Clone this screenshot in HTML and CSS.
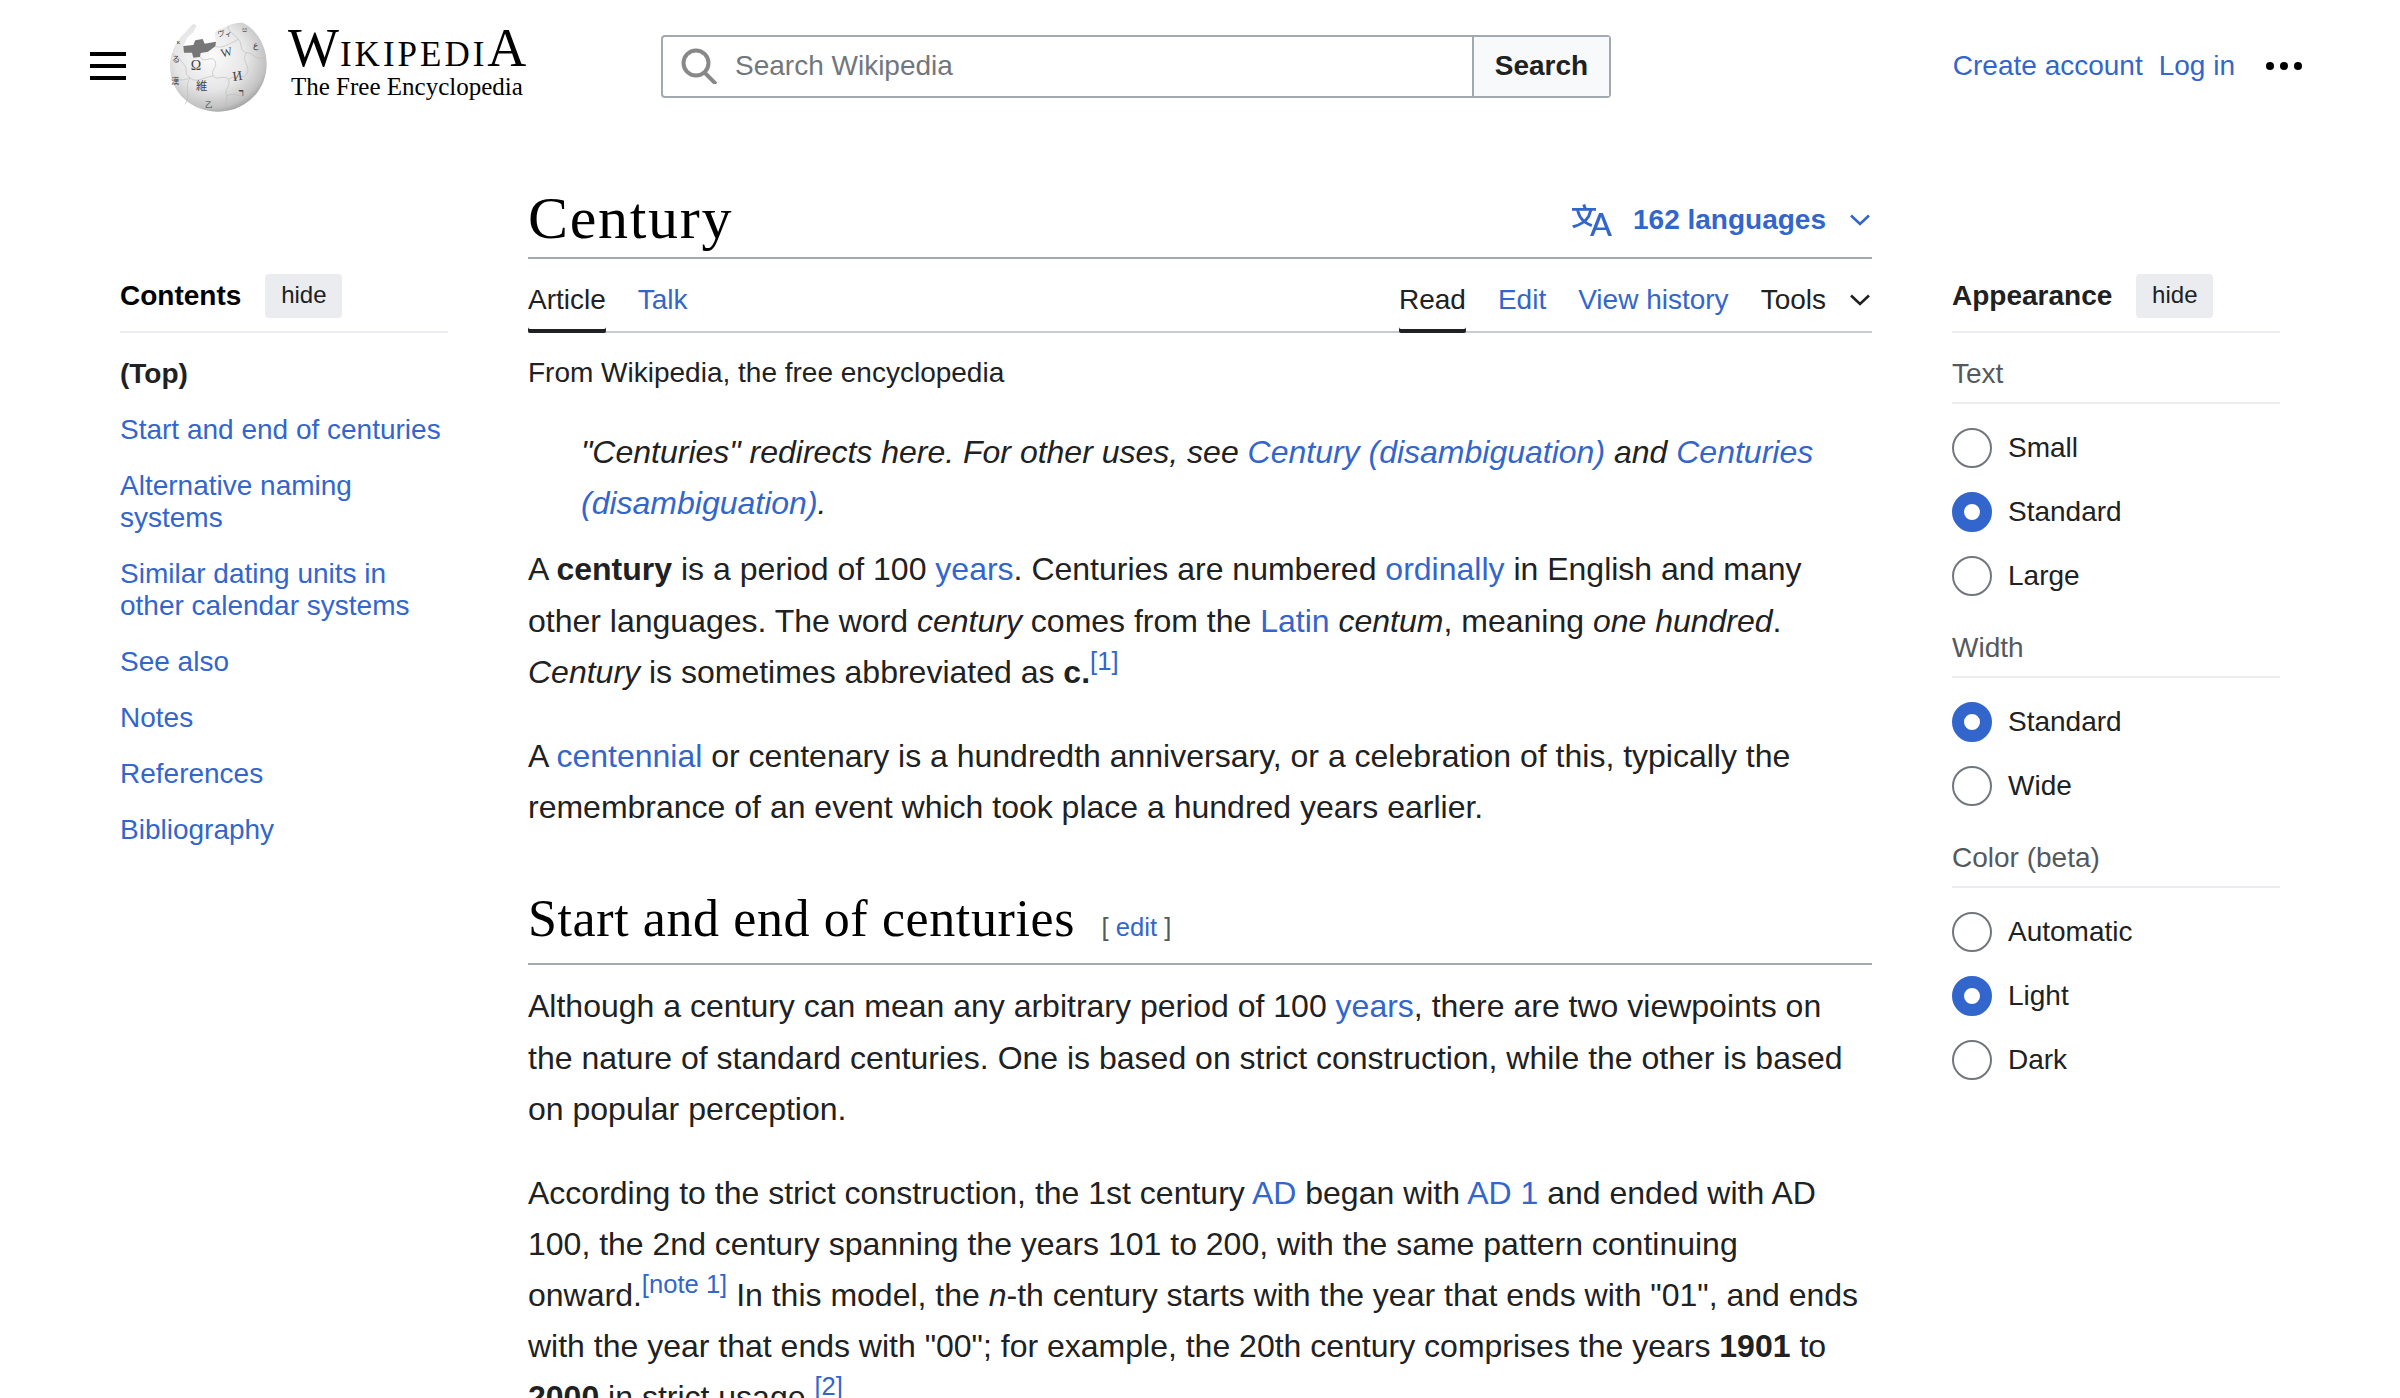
FILE: index.html
```html
<!DOCTYPE html>
<html lang="en">
<head>
<meta charset="utf-8">
<title>Century - Wikipedia</title>
<link rel="stylesheet" href="styles.css">
</head>
<body>

<header class="site-header">
  <div class="menu-btn"><span></span><span></span><span></span></div>
  <svg class="globe" viewBox="0 0 360 330" width="120" height="110">
    <defs>
      <radialGradient id="globeFill" cx="42%" cy="38%" r="68%">
        <stop offset="0" stop-color="#fbfbfb"/>
        <stop offset=".55" stop-color="#e6e6e6"/>
        <stop offset=".85" stop-color="#c2c2c2"/>
        <stop offset="1" stop-color="#8e8e8e"/>
      </radialGradient>
    </defs>
    <path fill="url(#globeFill)" d="M30 165C30 128 46 94 72 68L100 38L110 44L100 64L82 80L70 106L100 102L106 88L128 84L134 98L168 92L164 66L172 58L205 44C225 34 240 34 250 36C292 58 320 106 320 158C320 240 255 302 175 302C95 302 30 245 30 165Z"/>
    <path fill="#777" d="M70 105L100 102L106 88L128 84L134 98L168 92L166 106L144 122L122 126L120 138L100 140L96 125L72 125Z"/>
    <g fill="none" stroke="#bdbdbd" stroke-width="2">
      <path d="M36 130C60 135 60 150 72 160C85 175 70 190 90 200C60 215 50 200 34 205"/>
      <path d="M120 138C135 160 155 130 165 150C175 170 150 175 160 195C170 210 195 190 205 205C215 225 190 235 200 255C205 270 190 285 195 300"/>
      <path d="M166 106C185 115 215 95 235 85C250 100 235 120 260 125C285 125 280 150 318 140"/>
      <path d="M90 200C105 220 140 195 160 195M90 200C70 235 95 250 75 280"/>
      <path d="M200 255C225 240 245 265 265 255C285 240 275 215 310 215"/>
      <path d="M260 125C240 150 275 165 260 190C250 205 225 190 205 205"/>
      <path d="M205 44C200 60 225 70 235 85"/>
    </g>
    <g class="globe-glyphs">
      <text x="92" y="178" font-size="42">Ω</text>
      <text x="184" y="136" font-size="36" transform="rotate(-14 200 130)">W</text>
      <text x="218" y="208" font-size="40" transform="rotate(-8 235 195)">И</text>
      <text x="108" y="238" font-size="34" class="cjk">維</text>
      <text x="236" y="256" font-size="32" font-weight="bold">ר</text>
      <text x="172" y="76" font-size="22" class="cjk">ヴィ</text>
      <text x="278" y="112" font-size="28">ع</text>
      <text x="36" y="152" font-size="24" class="cjk">る</text>
      <text x="34" y="220" font-size="24" class="cjk">漢</text>
      <text x="50" y="98" font-size="20">к</text>
      <text x="245" y="62" font-size="22">ස</text>
      <text x="135" y="288" font-size="22" class="cjk">乙</text>
    </g>
  </svg>
  <a class="wordmark">
    <span class="wm-name">W<span class="wm-small">ikipedi</span>a</span>
    <span class="wm-tag">The Free Encyclopedia</span>
  </a>
  <form class="search-box">
    <div class="search-input">
      <svg class="search-icon" viewBox="0 0 36 36" width="36" height="36"><circle cx="15" cy="15" r="12.5" fill="none" stroke="#888" stroke-width="4"/><path d="M23 24L35 36" stroke="#888" stroke-width="4" fill="none"/></svg>
      <input type="text" placeholder="Search Wikipedia">
    </div>
    <button type="button" class="search-btn">Search</button>
  </form>
  <nav class="user-links">
    <a>Create account</a>
    <a>Log in</a>
    <span class="more-dots"><i></i><i></i><i></i></span>
  </nav>
</header>

<div class="page">

  <div class="title-row">
    <h1>Century</h1>
    <a class="lang-btn">
      <svg viewBox="0 0 20 20" width="40" height="40"><path fill="#36c" d="M20 18h-1.44a.6.6 0 0 1-.4-.12.8.8 0 0 1-.23-.31L17 15h-5l-1 2.54a.8.8 0 0 1-.22.3.6.6 0 0 1-.4.14H9l4.55-11.47h1.89zm-3.53-4.31L14.89 9.5a12 12 0 0 1-.39-1.24q-.09.37-.19.69l-.19.56-1.58 4.19zm-6.3-1.58a13.4 13.4 0 0 1-2.91-1.41 11.46 11.46 0 0 0 2.81-5.37H12V4H7.31a4 4 0 0 0-.2-.56C6.87 2.79 6.6 2 6.6 2l-1.47.5s.4.89.6 1.5H0v1.33h2.15A11.23 11.23 0 0 0 5 10.7a17.2 17.2 0 0 1-5 2.1q.56.82.87 1.38a23.3 23.3 0 0 0 5.22-2.51 15.6 15.6 0 0 0 3.56 1.77zM3.63 5.33h4.91a8.1 8.1 0 0 1-2.45 4.45 9.1 9.1 0 0 1-2.46-4.45"/></svg>
      <span>162 languages</span>
      <svg class="chev" viewBox="0 0 20 12" width="20" height="12"><path d="M1 1.5L10 10L19 1.5" fill="none" stroke="#36c" stroke-width="2.6"/></svg>
    </a>
  </div>

  <aside class="toc">
    <div class="panel-head"><b>Contents</b><span class="hide-btn">hide</span></div>
    <ul>
      <li class="toc-top">(Top)</li>
      <li><a>Start and end of centuries</a></li>
      <li><a>Alternative naming<br>systems</a></li>
      <li><a>Similar dating units in<br>other calendar systems</a></li>
      <li><a>See also</a></li>
      <li><a>Notes</a></li>
      <li><a>References</a></li>
      <li><a>Bibliography</a></li>
    </ul>
  </aside>

  <main class="article">
    <div class="tabs">
      <div class="tab-group">
        <span class="tab selected">Article</span>
        <a class="tab">Talk</a>
      </div>
      <div class="tab-group">
        <span class="tab selected">Read</span>
        <a class="tab">Edit</a>
        <a class="tab">View history</a>
        <span class="tab tools">Tools
          <svg viewBox="0 0 20 12" width="20" height="12"><path d="M1 1.5L10 10L19 1.5" fill="none" stroke="#202122" stroke-width="2.6"/></svg>
        </span>
      </div>
    </div>

    <div class="site-sub">From Wikipedia, the free encyclopedia</div>

    <div class="hatnote">"Centuries" redirects here. For other uses, see <a>Century (disambiguation)</a> and <a>Centuries (disambiguation)</a>.</div>

    <p>A <b>century</b> is a period of 100 <a>years</a>. Centuries are numbered <a>ordinally</a> in English and many other languages. The word <i>century</i> comes from the <a>Latin</a> <i>centum</i>, meaning <i>one hundred</i>. <i>Century</i> is sometimes abbreviated as <b>c.</b><sup><a>[1]</a></sup></p>

    <p>A <a>centennial</a> or centenary is a hundredth anniversary, or a celebration of this, typically the remembrance of an event which took place a hundred years earlier.</p>

    <h2>Start and end of centuries <span class="edit-link">[ <a>edit</a> ]</span></h2>

    <p>Although a century can mean any arbitrary period of 100 <a>years</a>, there are two viewpoints on the nature of standard centuries. One is based on strict construction, while the other is based on popular perception.</p>

    <p>According to the strict construction, the 1st century <a>AD</a> began with <a>AD 1</a> and ended with AD 100, the 2nd century spanning the years 101 to 200, with the same pattern continuing <span class="nobr">onward.<sup><a>[note 1]</a></sup></span> In this model, the <i>n</i>-th century starts with the year that ends with "01", and ends with the year that ends with "00"; for example, the 20th century comprises the years <b>1901</b> to <b>2000</b> in strict usage.<sup><a>[2]</a></sup></p>
  </main>

  <aside class="appearance">
    <div class="panel-head"><b>Appearance</b><span class="hide-btn">hide</span></div>

    <div class="opt-label">Text</div>
    <div class="opt-list">
      <label class="opt"><input type="radio" name="size">Small</label>
      <label class="opt"><input type="radio" name="size" checked>Standard</label>
      <label class="opt"><input type="radio" name="size">Large</label>
    </div>

    <div class="opt-label">Width</div>
    <div class="opt-list">
      <label class="opt"><input type="radio" name="width" checked>Standard</label>
      <label class="opt"><input type="radio" name="width">Wide</label>
    </div>

    <div class="opt-label">Color (beta)</div>
    <div class="opt-list">
      <label class="opt"><input type="radio" name="color">Automatic</label>
      <label class="opt"><input type="radio" name="color" checked>Light</label>
      <label class="opt"><input type="radio" name="color">Dark</label>
    </div>
  </aside>

</div>

</body>
</html>
```

FILE: styles.css
```css
html, body {
    margin: 0;
    height: 1398px;
    overflow: hidden;
    background: #fff;
}
body {
    font-family: "Liberation Sans", Arial, sans-serif;
    font-size: 28px;
    color: #202122;
}
a { color: #36c; }

/* header */
.site-header {
    display: flex;
    align-items: center;
    height: 132px;
}
.menu-btn {
    display: flex;
    flex-direction: column;
    justify-content: space-between;
    width: 36px;
    height: 28px;
    margin-left: 90px;
    margin-right: 34px;
}
.menu-btn span {
    display: block;
    height: 4px;
    background: #000;
}
.globe { flex: none; margin-right: 8px; }
.globe-glyphs text {
    font-family: "Liberation Serif", serif;
    fill: #444;
}
.globe-glyphs .cjk { font-family: "Noto Sans CJK JP", sans-serif; }
.wordmark {
    display: flex;
    flex-direction: column;
    align-items: flex-start;
    width: 373px;
    font-family: "Liberation Serif", serif;
    color: #000;
}
.wm-name {
    font-size: 54px;
    line-height: 34px;
    text-transform: uppercase;
    letter-spacing: 1px;
}
.wm-small { font-size: 35px; letter-spacing: 3px; }
.wm-tag {
    font-size: 25px;
    line-height: 30px;
    margin-left: 3px;
}
.search-box {
    display: flex;
    width: 950px;
    height: 63px;
    box-sizing: border-box;
    border: 2px solid #a2a9b1;
    border-radius: 4px;
}
.search-input {
    flex: 1;
    display: flex;
    align-items: center;
    padding-left: 18px;
}
.search-input input {
    flex: 1;
    border: 0;
    outline: 0;
    padding: 0;
    margin-left: 18px;
    font: 28px "Liberation Sans", Arial, sans-serif;
    color: #202122;
}
.search-input input::placeholder { color: #72777d; opacity: 1; }
.search-btn {
    width: 137px;
    border: 0;
    border-left: 2px solid #a2a9b1;
    background: #f8f9fa;
    font: bold 28px "Liberation Sans", Arial, sans-serif;
    color: #202122;
    padding: 0;
}
.user-links {
    display: flex;
    align-items: center;
    margin-left: auto;
    margin-right: 98px;
}
.user-links a { margin-right: 16px; }
.user-links a + a { margin-right: 31px; }
.more-dots { display: flex; gap: 6px; }
.more-dots i {
    display: block;
    width: 8px;
    height: 8px;
    border-radius: 50%;
    background: #000;
}

/* page columns */
.page {
    display: grid;
    grid-template-columns: 328px 1344px 328px;
    grid-template-rows: auto 1fr;
    column-gap: 80px;
    padding: 0 120px;
}
.title-row {
    grid-column: 2;
    grid-row: 1;
    display: flex;
    justify-content: space-between;
    align-items: flex-end;
    height: 127px;
    padding-bottom: 3px;
    box-sizing: border-box;
    border-bottom: 2px solid #a2a9b1;
}
h1 {
    margin: 0;
    font: normal 60px/72px "Liberation Serif", serif;
    letter-spacing: 1.7px;
    color: #000;
}
.lang-btn {
    display: flex;
    align-items: center;
    font-weight: bold;
    margin-bottom: 14px;
}
.lang-btn span { margin: 0 24px 0 21px; }
.lang-btn svg.chev { margin-right: 2px; }

.panel-head {
    display: flex;
    align-items: center;
    gap: 24px;
    height: 74px;
    box-sizing: border-box;
    padding-top: 2px;
    margin-bottom: 1px;
    border-bottom: 2px solid #eaecf0;
}
.panel-head b { color: #000; }
.appearance .panel-head b { color: #202122; }
.hide-btn {
    width: 77px;
    height: 44px;
    line-height: 42px;
    text-align: center;
    font-size: 24px;
    background: #eaecf0;
    border-radius: 4px;
}

/* contents */
.toc { grid-column: 1; grid-row: 2; }
.toc ul {
    list-style: none;
    margin: 13px 0 0;
    padding: 0;
}
.toc li {
    padding: 12px 0;
    line-height: 32px;
}
.toc-top { font-weight: bold; }

/* article */
.article { grid-column: 2; grid-row: 2; }
.tabs {
    display: flex;
    justify-content: space-between;
    height: 72px;
    border-bottom: 2px solid #c8ccd1;
}
.tab-group { display: flex; gap: 32px; }
.tab {
    display: flex;
    align-items: center;
    height: 74px;
    box-sizing: border-box;
    padding-top: 8px;
}
.tab.selected {
    box-shadow: inset 0 -4px 0 #202122;
    border-radius: 0 0 2px 2px;
}
.tools svg { margin-left: 24px; margin-right: 2px; }
.site-sub {
    margin-top: 24px;
    line-height: 32px;
}
.hatnote {
    font-size: 32px;
    font-style: italic;
    line-height: 51.2px;
    padding-left: 53px;
    margin: 38px 0 15px;
}
p {
    font-size: 32px;
    line-height: 51.2px;
    margin: 0 0 32.5px;
}
.nobr { white-space: nowrap; }
sup {
    font-size: 25.6px;
    line-height: 1;
    vertical-align: 13px;
}
h2 {
    font: normal 52px/64px "Liberation Serif", serif;
    letter-spacing: .6px;
    color: #000;
    margin: 54.5px 0 16px;
    padding: 0 0 12px;
    border-bottom: 2px solid #a2a9b1;
}
.edit-link {
    font: 25.6px "Liberation Sans", Arial, sans-serif;
    letter-spacing: 0;
    color: #54595d;
    margin-left: 13px;
}

/* appearance */
.appearance { grid-column: 3; grid-row: 2; }
.opt-label {
    padding: 24px 0 12px;
    line-height: 32px;
    color: #54595d;
    border-bottom: 2px solid #eaecf0;
}
.opt-list { margin-top: 12px; }
.opt {
    display: flex;
    align-items: center;
    height: 64px;
    gap: 16px;
}
.opt input {
    appearance: none;
    -webkit-appearance: none;
    width: 40px;
    height: 40px;
    margin: 0;
    box-sizing: border-box;
    border: 2px solid #72777d;
    border-radius: 50%;
    background: #fff;
}
.opt input:checked {
    border: 12px solid #36c;
}
```
